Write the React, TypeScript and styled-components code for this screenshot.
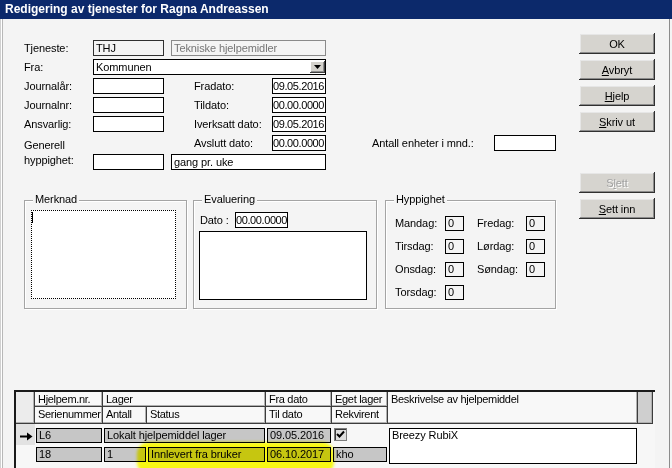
import React from "react";
import styled, { createGlobalStyle } from "styled-components";

const GlobalStyle = createGlobalStyle`
  html, body { margin: 0; padding: 0; }
  body {
    width: 672px;
    height: 468px;
    overflow: hidden;
    background: #f4f4f4;
    font-family: "Liberation Sans", Arial, sans-serif;
    font-size: 11px;
    letter-spacing: -0.1px;
    color: #000;
  }
  *, *::before, *::after { box-sizing: border-box; }
`;

const Window = styled.div`
  width: 672px;
  height: 468px;
  display: flex;
  flex-direction: column;
  overflow: hidden;
  background: #f4f4f4;
`;

const TitleBar = styled.div`
  flex: none;
  height: 19px;
  padding-left: 5px;
  background: #0c296b;
  color: #fff;
  font-weight: bold;
  font-size: 12px;
  letter-spacing: 0;
  line-height: 19px;
  white-space: nowrap;
`;

const Frame = styled.div`
  flex: 1;
  min-height: 0;
  display: flex;
  flex-direction: column;
  margin-right: 2px;
  border-right: 1px solid #8c8c8c;
  box-shadow: inset 1px 0 #d0d0d0, inset 2px 0 #ffffff, inset 3px 0 #b8b8b8;
`;

const TopArea = styled.div`
  display: flex;
  align-items: flex-start;
`;

const FormColumn = styled.div`
  display: flex;
  flex-direction: column;
  padding: 21px 0 0 24px;
`;

const FormGrid = styled.div`
  display: grid;
  grid-template-columns: 69px 71px 7px 23px 78px 54px 46px 122px 62px;
  grid-auto-rows: 19px;
`;

type Place = { $col?: string; $row?: string };

const Label = styled.div<Place>`
  grid-column: ${(p) => p.$col ?? "auto"};
  grid-row: ${(p) => p.$row ?? "auto"};
  line-height: 16px;
  white-space: nowrap;
`;

const TwoLineLabel = styled.div<Place>`
  grid-column: ${(p) => p.$col ?? "auto"};
  grid-row: ${(p) => p.$row ?? "auto"};
  padding-top: 3px;
  line-height: 15px;
`;

type FieldKind = "normal" | "readonly" | "disabled";

const Field = styled.div<Place & { $kind?: FieldKind }>`
  grid-column: ${(p) => p.$col ?? "auto"};
  grid-row: ${(p) => p.$row ?? "auto"};
  height: 16px;
  border: 1px solid
    ${(p) => (p.$kind === "disabled" ? "#8a8a8a" : p.$kind === "readonly" ? "#303030" : "#000")};
  background: ${(p) => (p.$kind && p.$kind !== "normal" ? "#f4f4f4" : "#fff")};
  color: ${(p) => (p.$kind === "disabled" ? "#767676" : "#000")};
  padding: 0 0 0 2px;
  line-height: 14px;
  white-space: nowrap;
  overflow: hidden;
`;

const DateField = styled(Field)`
  padding-left: 0;
  letter-spacing: -0.4px;
`;

const Combo = styled(Field)`
  display: flex;
  align-items: center;
  justify-content: space-between;
  padding-right: 0;
`;

const DropButton = styled.div`
  width: 15px;
  height: 12px;
  display: flex;
  align-items: center;
  justify-content: center;
  background: #d4d2cc;
  box-shadow: inset -1px -1px #404040, inset 1px 1px #ffffff, inset -2px -2px #8c8c8c;
`;

const GroupRow = styled.div`
  display: flex;
  margin-top: 27px;
`;

const Group = styled.div<{ $w: number; $ml?: number }>`
  width: ${(p) => p.$w}px;
  height: 109px;
  margin-left: ${(p) => p.$ml ?? 0}px;
  display: flex;
  flex-direction: column;
  align-items: flex-start;
  border: 1px solid #a4a4a4;
  box-shadow: 1px 1px 0 #ffffff, inset 1px 1px 0 #ffffff;
`;

const Legend = styled.div`
  margin: -8px 0 0 8px;
  padding: 0 2px;
  line-height: 13px;
  background: #f4f4f4;
  white-space: nowrap;
`;

const NoteArea = styled.div`
  width: 145px;
  height: 89px;
  margin: 4px 0 0 6px;
  background: #fff;
  border: 1px dotted #000;
  padding: 1px 0 0 0;
`;

const Caret = styled.div`
  width: 1px;
  height: 11px;
  background: #000;
`;

const DateRow = styled.div`
  display: flex;
  align-items: center;
  margin: 6px 0 0 6px;
`;

const InlineLabel = styled.div<{ $w: number }>`
  width: ${(p) => p.$w}px;
  line-height: 16px;
  white-space: nowrap;
`;

const EvalArea = styled.div`
  width: 168px;
  height: 69px;
  margin: 3px 0 0 5px;
  background: #fff;
  border: 1px solid #000;
`;

const DayGrid = styled.div`
  display: grid;
  grid-template-columns: 50px 19px 13px 49px 19px;
  grid-auto-rows: 15px;
  row-gap: 8px;
  margin: 10px 0 0 9px;
`;

const DayLabel = styled.div<Place>`
  grid-column: ${(p) => p.$col ?? "auto"};
  grid-row: ${(p) => p.$row ?? "auto"};
  line-height: 15px;
  white-space: nowrap;
`;

const DayBox = styled.div<Place>`
  grid-column: ${(p) => p.$col ?? "auto"};
  grid-row: ${(p) => p.$row ?? "auto"};
  height: 15px;
  border: 1px solid #000;
  background: #f4f4f4;
  padding-left: 2px;
  line-height: 13px;
`;

const ButtonColumn = styled.div`
  margin-left: auto;
  margin-right: 14px;
  padding-top: 14px;
  display: flex;
  flex-direction: column;
  gap: 40px;
`;

const ButtonStack = styled.div`
  display: flex;
  flex-direction: column;
  gap: 5px;
`;

const Button = styled.button<{ $disabled?: boolean }>`
  width: 76px;
  height: 21px;
  margin: 0;
  padding: 1px 0 0 0;
  border: none;
  font-family: "Liberation Sans", Arial, sans-serif;
  font-size: 11px;
  letter-spacing: -0.1px;
  background: #d6d4cf;
  color: ${(p) => (p.$disabled ? "#a2a2a2" : "#000")};
  text-shadow: ${(p) => (p.$disabled ? "1px 1px 0 #ffffff" : "none")};
  box-shadow: inset -1px -1px #303030, inset 1px 1px #f4f4f4, inset -2px -2px #8c8c8c,
    inset 2px 2px #e6e6e6;
  u { text-decoration-thickness: 1px; text-underline-offset: 1px; }
`;

/* ---------- data grid ---------- */

const DataGrid = styled.div`
  position: relative;
  width: 641px;
  margin: 81px 0 0 14px;
  display: grid;
  grid-template-columns: 19px 68px 44px 119px 66px 56px 250px 15px;
  grid-template-rows: 15px 17px 21px 21px 20px;
  border-top: 2px solid #1a1a1a;
  border-left: 2px solid #1a1a1a;
  background: #f7f7f7;
`;

const HeadCell = styled.div<Place & { $tone?: "light" | "corner" | "dark" }>`
  grid-column: ${(p) => p.$col ?? "auto"};
  grid-row: ${(p) => p.$row ?? "auto"};
  background: ${(p) =>
    p.$tone === "dark" ? "#cfcfcf" : p.$tone === "corner" ? "#ececec" : "#f8f8f8"};
  border-right: 1px solid #3c3c3c;
  border-bottom: 1px solid #3c3c3c;
  box-shadow: inset -1px -1px 0 #b0b0b0;
  padding-left: 3px;
  letter-spacing: -0.3px;
  line-height: 14px;
  white-space: nowrap;
  overflow: hidden;
`;

const RowHead = styled.div<Place & { $current?: boolean }>`
  grid-column: ${(p) => p.$col ?? "auto"};
  grid-row: ${(p) => p.$row ?? "auto"};
  background: ${(p) => (p.$current ? "#e2e2e2" : "#f7f7f7")};
  padding: 7px 0 0 4px;
`;

const Cell = styled.div<Place & { $pt: number }>`
  grid-column: ${(p) => p.$col ?? "auto"};
  grid-row: ${(p) => p.$row ?? "auto"};
  padding: ${(p) => p.$pt}px 1px 0 1px;
  min-width: 0;
`;

const CellBox = styled.div<{ $tone?: "gray" | "white"; $h?: number }>`
  height: ${(p) => p.$h ?? 15}px;
  border: 1px solid #000;
  background: ${(p) => (p.$tone === "white" ? "#ffffff" : "#c6c6c6")};
  padding-left: 2px;
  line-height: 13px;
  white-space: nowrap;
  overflow: hidden;
`;

const CheckBox = styled.div`
  width: 13px;
  height: 13px;
  margin-left: 1px;
  background: #dedede;
  border: 1px solid #7c7c7c;
  box-shadow: inset 1px 1px 0 #3a3a3a;
  display: flex;
  align-items: center;
  justify-content: center;
`;

const Highlight = styled.div`
  position: absolute;
  left: 121px;
  top: 50px;
  width: 197px;
  height: 32px;
  border-radius: 12px;
  background: rgba(255, 255, 0, 0.92);
  mix-blend-mode: multiply;
  filter: blur(1.5px);
  pointer-events: none;
`;

const TriangleDown = () => (
  <svg width="7" height="4" viewBox="0 0 7 4">
    <polygon points="0,0 7,0 3.5,4" fill="#000" />
  </svg>
);

const RowArrow = () => (
  <svg width="13" height="9" viewBox="0 0 13 9">
    <path d="M0 4.5 H8" stroke="#000" strokeWidth="2" />
    <polygon points="7,0.5 12.5,4.5 7,8.5" fill="#000" />
  </svg>
);

const Check = () => (
  <svg width="9" height="9" viewBox="0 0 9 9">
    <path d="M1 4 L3.5 6.5 L8 1.5" stroke="#000" strokeWidth="2" fill="none" />
  </svg>
);

export default function App() {
  return (
    <>
      <GlobalStyle />
      <Window>
        <TitleBar>Redigering av tjenester for Ragna Andreassen</TitleBar>
        <Frame>
          <TopArea>
            <FormColumn>
              <FormGrid>
                <Label $col="1" $row="1">Tjeneste:</Label>
                <Field $col="2" $row="1" $kind="readonly">THJ</Field>
                <Field $col="4 / 7" $row="1" $kind="disabled">Tekniske hjelpemidler</Field>

                <Label $col="1" $row="2">Fra:</Label>
                <Combo $col="2 / 7" $row="2">
                  <span>Kommunen</span>
                  <DropButton>
                    <TriangleDown />
                  </DropButton>
                </Combo>

                <Label $col="1" $row="3">Journalår:</Label>
                <Field $col="2" $row="3" />
                <Label $col="5" $row="3">Fradato:</Label>
                <DateField $col="6" $row="3">09.05.2016</DateField>

                <Label $col="1" $row="4">Journalnr:</Label>
                <Field $col="2" $row="4" />
                <Label $col="5" $row="4">Tildato:</Label>
                <DateField $col="6" $row="4">00.00.0000</DateField>

                <Label $col="1" $row="5">Ansvarlig:</Label>
                <Field $col="2" $row="5" />
                <Label $col="5" $row="5">Iverksatt dato:</Label>
                <DateField $col="6" $row="5">09.05.2016</DateField>

                <TwoLineLabel $col="1" $row="6 / 8">
                  Generell
                  <br />
                  hyppighet:
                </TwoLineLabel>
                <Label $col="5" $row="6">Avslutt dato:</Label>
                <DateField $col="6" $row="6">00.00.0000</DateField>
                <Label $col="8" $row="6">Antall enheter i mnd.:</Label>
                <Field $col="9" $row="6" />

                <Field $col="2" $row="7" />
                <Field $col="4 / 7" $row="7">gang pr. uke</Field>
              </FormGrid>

              <GroupRow>
                <Group $w={163}>
                  <Legend>Merknad</Legend>
                  <NoteArea>
                    <Caret />
                  </NoteArea>
                </Group>
                <Group $w={184} $ml={6}>
                  <Legend>Evaluering</Legend>
                  <DateRow>
                    <InlineLabel $w={35}>Dato :</InlineLabel>
                    <DateField>00.00.0000</DateField>
                  </DateRow>
                  <EvalArea />
                </Group>
                <Group $w={171} $ml={8}>
                  <Legend>Hyppighet</Legend>
                  <DayGrid>
                    <DayLabel $col="1" $row="1">Mandag:</DayLabel>
                    <DayBox $col="2" $row="1">0</DayBox>
                    <DayLabel $col="4" $row="1">Fredag:</DayLabel>
                    <DayBox $col="5" $row="1">0</DayBox>

                    <DayLabel $col="1" $row="2">Tirsdag:</DayLabel>
                    <DayBox $col="2" $row="2">0</DayBox>
                    <DayLabel $col="4" $row="2">Lørdag:</DayLabel>
                    <DayBox $col="5" $row="2">0</DayBox>

                    <DayLabel $col="1" $row="3">Onsdag:</DayLabel>
                    <DayBox $col="2" $row="3">0</DayBox>
                    <DayLabel $col="4" $row="3">Søndag:</DayLabel>
                    <DayBox $col="5" $row="3">0</DayBox>

                    <DayLabel $col="1" $row="4">Torsdag:</DayLabel>
                    <DayBox $col="2" $row="4">0</DayBox>
                  </DayGrid>
                </Group>
              </GroupRow>
            </FormColumn>

            <ButtonColumn>
              <ButtonStack>
                <Button>OK</Button>
                <Button>
                  <u>A</u>vbryt
                </Button>
                <Button>
                  <u>H</u>jelp
                </Button>
                <Button>
                  <u>S</u>kriv ut
                </Button>
              </ButtonStack>
              <ButtonStack>
                <Button $disabled>
                  S<u>l</u>ett
                </Button>
                <Button>
                  <u>S</u>ett inn
                </Button>
              </ButtonStack>
            </ButtonColumn>
          </TopArea>

          <DataGrid>
            <HeadCell $col="1" $row="1 / 3" $tone="corner" />
            <HeadCell $col="2" $row="1">Hjelpem.nr.</HeadCell>
            <HeadCell $col="3 / 5" $row="1">Lager</HeadCell>
            <HeadCell $col="5" $row="1">Fra dato</HeadCell>
            <HeadCell $col="6" $row="1">Eget lager</HeadCell>
            <HeadCell $col="7" $row="1 / 3">Beskrivelse av hjelpemiddel</HeadCell>
            <HeadCell $col="8" $row="1 / 3" $tone="dark" />
            <HeadCell $col="2" $row="2">Serienummer</HeadCell>
            <HeadCell $col="3" $row="2">Antall</HeadCell>
            <HeadCell $col="4" $row="2">Status</HeadCell>
            <HeadCell $col="5" $row="2">Til dato</HeadCell>
            <HeadCell $col="6" $row="2">Rekvirent</HeadCell>

            <RowHead $col="1" $row="3" $current>
              <RowArrow />
            </RowHead>
            <Cell $col="2" $row="3" $pt={4}>
              <CellBox>L6</CellBox>
            </Cell>
            <Cell $col="3 / 5" $row="3" $pt={4}>
              <CellBox>Lokalt hjelpemiddel lager</CellBox>
            </Cell>
            <Cell $col="5" $row="3" $pt={4}>
              <CellBox>09.05.2016</CellBox>
            </Cell>
            <Cell $col="6" $row="3" $pt={4}>
              <CheckBox>
                <Check />
              </CheckBox>
            </Cell>
            <Cell $col="7" $row="3 / 5" $pt={4}>
              <CellBox $tone="white" $h={36}>Breezy RubiX</CellBox>
            </Cell>

            <RowHead $col="1" $row="4" />
            <Cell $col="2" $row="4" $pt={2}>
              <CellBox>18</CellBox>
            </Cell>
            <Cell $col="3" $row="4" $pt={2}>
              <CellBox>1</CellBox>
            </Cell>
            <Cell $col="4" $row="4" $pt={2}>
              <CellBox>Innlevert fra bruker</CellBox>
            </Cell>
            <Cell $col="5" $row="4" $pt={2}>
              <CellBox>06.10.2017</CellBox>
            </Cell>
            <Cell $col="6" $row="4" $pt={2}>
              <CellBox>kho</CellBox>
            </Cell>

            <Highlight />
          </DataGrid>
        </Frame>
      </Window>
    </>
  );
}
